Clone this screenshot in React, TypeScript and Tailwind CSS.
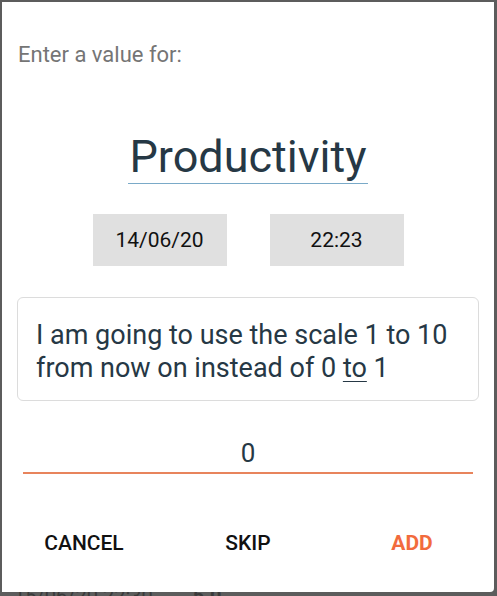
import React from "react";

export default function App() {
  return (
    <div
      className="relative w-[497px] h-[596px] overflow-hidden bg-[#5c5c5c]"
      style={{ fontFamily: "Roboto, 'Liberation Sans', sans-serif" }}
    >
      {/* background content peeking out below the dialog */}
      <div className="absolute left-[14px] top-[584px] flex gap-[40px] text-[20px] leading-[24px] text-[#3a3a3a]">
        <span>15/06/20 22:30</span>
        <span className="font-bold">5.0</span>
      </div>

      {/* dialog */}
      <div className="absolute left-[2px] top-[2px] w-[492px] h-[590px] bg-white rounded-br-[4px] flex flex-col pt-[40px] pb-[36px]">
        <div className="pl-[16px] text-[22px] leading-[26px] text-[#757575]">
          Enter a value for:
        </div>

        <div className="mt-[66px] flex justify-center">
          <div className="text-[45px] leading-[45px] text-[#263845] pb-[4px] border-b-[1.5px] border-[#7aaac8] px-[1px]">
            Productivity
          </div>
        </div>

        <div className="mt-[30px] flex justify-center gap-[43px]">
          <div className="w-[134px] h-[52px] bg-[#e0e0e0] flex items-center justify-center pt-[2px] text-[21px] text-[#111]">
            14/06/20
          </div>
          <div className="w-[134px] h-[52px] bg-[#e0e0e0] flex items-center justify-center pt-[2px] text-[21px] text-[#111]">
            22:23
          </div>
        </div>

        <div className="mt-[31px] mx-[15px] border border-[#dcdcdc] rounded-[6px] pl-[18px] pr-[10px] pt-[21px] pb-[15px] text-[27px] leading-[33px] text-[#263845]">
          I am going to use the scale 1 to 10
          <br />
          from now on instead of 0 <span className="underline underline-offset-[4px] decoration-1">to</span> 1
        </div>

        <div className="mt-[36px] mx-[21px] text-center text-[26px] leading-[33px] text-[#263845] pb-[2px]">
          0
        </div>
        <div className="mx-[21px] h-[2px] bg-[#e8845c]" />

        <div className="mt-auto grid grid-cols-3 text-[21px] leading-[25px] font-medium">
          <div className="text-center text-[#111]">CANCEL</div>
          <div className="text-center text-[#111]">SKIP</div>
          <div className="text-center text-[#f26b3d] font-bold">ADD</div>
        </div>
      </div>
    </div>
  );
}
